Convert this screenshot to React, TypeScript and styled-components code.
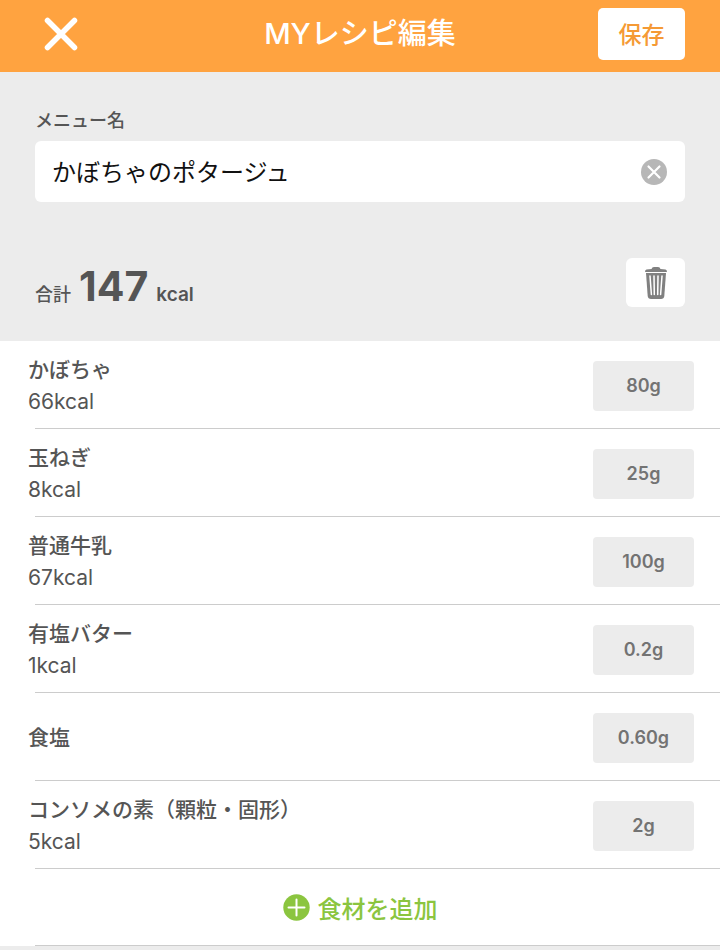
import React, { useState } from "react";
import styled, { createGlobalStyle } from "styled-components";

const colors = {
  orange: "#ffa340",
  saveText: "#f59a35",
  panel: "#ececec",
  text: "#555555",
  muted: "#737373",
  line: "#cccccc",
  green: "#8bc53f",
};

const GlobalStyle = createGlobalStyle`
  *, *::before, *::after { box-sizing: border-box; }
  body {
    margin: 0;
    background: ${colors.panel};
    color: ${colors.text};
    font-family: Inter, "Noto Sans CJK JP", sans-serif;
  }
  button, input { font: inherit; color: inherit; }
  button { border: 0; padding: 0; cursor: pointer; }
  svg { display: block; }
`;

const Header = styled.header`
  display: grid;
  grid-template-columns: 1fr auto 1fr;
  align-items: center;
  height: 72px;
  padding: 0 35px 4px;
  background: ${colors.orange};
  color: #fff;
`;

const Title = styled.h1`
  margin: 0;
  font-size: 29px;
  line-height: 40px;
  font-weight: 500;
`;

const CloseButton = styled.button`
  justify-self: start;
  padding: 8px;
  background: none;
`;

const SaveButton = styled.button`
  justify-self: end;
  width: 87px;
  height: 52px;
  padding-bottom: 2px;
  border-radius: 5px;
  background: #fff;
  color: ${colors.saveText};
  font-size: 23px;
  font-weight: 500;
`;

const Summary = styled.section`
  padding: 36px 35px 26px;
  background: ${colors.panel};
`;

const FieldLabel = styled.label`
  display: block;
  font-size: 18px;
  line-height: 26px;
  font-weight: 500;
`;

const Field = styled.div`
  display: flex;
  align-items: center;
  height: 61px;
  margin-top: 7px;
  padding: 0 17px;
  border-radius: 6px;
  background: #fff;
`;

const NameInput = styled.input`
  flex: 1;
  min-width: 0;
  height: 100%;
  padding: 0 0 2px;
  border: 0;
  outline: 0;
  background: none;
  color: #111;
  font-size: 24px;
`;

const ClearButton = styled.button`
  background: none;
`;

const TotalRow = styled.div`
  display: flex;
  justify-content: space-between;
  align-items: flex-start;
  margin-top: 56px;
`;

const Total = styled.p`
  display: flex;
  align-items: baseline;
  gap: 8px;
  height: 49px;
  margin: 8px 0 0;
  font-size: 18px;
  line-height: 40px;
  font-weight: 500;
`;

const TotalNumber = styled.strong`
  font-size: 41px;
  font-weight: 700;
`;

const TotalUnit = styled.span`
  font-size: 19px;
  font-weight: 600;
`;

const DeleteButton = styled.button`
  display: grid;
  place-items: center;
  width: 59px;
  height: 49px;
  border-radius: 6px;
  background: #fff;
  color: #808080;
`;

const List = styled.ul`
  margin: 0;
  padding: 0;
  list-style: none;
  background: #fff;
`;

const Item = styled.li`
  &::after {
    content: "";
    display: block;
    height: 1px;
    margin-left: 35px;
    background: ${colors.line};
  }
`;

const ItemBody = styled.div`
  display: flex;
  align-items: center;
  justify-content: space-between;
  min-height: 87px;
  padding: 2px 26px 0 28px;
`;

const ItemName = styled.div`
  font-size: 21px;
  line-height: 32px;
  font-weight: 500;
`;

const ItemEnergy = styled.div`
  font-size: 21px;
  line-height: 32px;
`;

const AmountButton = styled.button`
  width: 101px;
  height: 50px;
  border-radius: 4px;
  background: ${colors.panel};
  color: ${colors.muted};
  font-size: 18px;
  font-weight: 600;
`;

const AddButton = styled.button`
  display: flex;
  align-items: center;
  justify-content: center;
  gap: 8px;
  width: 100%;
  height: 76px;
  background: #fff;
  color: ${colors.green};
  font-size: 24px;
  font-weight: 500;
`;

const CloseIcon = () => (
  <svg width="36" height="36" viewBox="0 0 36 36" aria-hidden="true">
    <path d="M4.5 4.5 31.5 31.5M31.5 4.5 4.5 31.5" stroke="#fff" strokeWidth="5.5" strokeLinecap="round" />
  </svg>
);

const ClearIcon = () => (
  <svg width="28" height="28" viewBox="0 0 28 28" aria-hidden="true">
    <circle cx="14" cy="14" r="13" fill="#b7b7b7" />
    <path d="M8.5 8.500 19.500 19.500M19.500 8.500 8.500 19.500" stroke="#fff" strokeWidth="2.2" strokeLinecap="round" />
  </svg>
);

const TrashIcon = () => (
  <svg width="24" height="34" viewBox="0 0 24 34" aria-hidden="true">
    <path d="M7.500 3Q8 1 10 1h4q2 0 2.500 2l5 .5q1.500.3 1.500 2.500H1q0-2.200 1.500-2.500z" fill="currentColor" />
    <path d="M2 7h20l-1.700 23q-.3 3-3.300 3H7q-3 0-3.300-3z" fill="currentColor" />
    <path d="M6 10 7.400 28.500M10 10l.3 18.500M14 10l-.3 18.500M18 10 16.600 28.500" stroke="#fff" strokeWidth="1.500" strokeLinecap="round" />
  </svg>
);

const AddIcon = () => (
  <svg width="27" height="27" viewBox="0 0 27 27" aria-hidden="true">
    <circle cx="13.500" cy="13.500" r="13.200" fill="currentColor" />
    <path d="M13.500 5.500v16M5.500 13.500h16" stroke="#fff" strokeWidth="2" strokeLinecap="round" />
  </svg>
);

interface Ingredient {
  name: string;
  energy?: string;
  amount: string;
}

const ingredients: Ingredient[] = [
  { name: "かぼちゃ", energy: "66kcal", amount: "80g" },
  { name: "玉ねぎ", energy: "8kcal", amount: "25g" },
  { name: "普通牛乳", energy: "67kcal", amount: "100g" },
  { name: "有塩バター", energy: "1kcal", amount: "0.2g" },
  { name: "食塩", amount: "0.60g" },
  { name: "コンソメの素（顆粒・固形）", energy: "5kcal", amount: "2g" },
];

export default function App() {
  const [name, setName] = useState("かぼちゃのポタージュ");

  return (
    <main lang="ja">
      <GlobalStyle />
      <Header>
        <CloseButton type="button" aria-label="閉じる">
          <CloseIcon />
        </CloseButton>
        <Title>MYレシピ編集</Title>
        <SaveButton type="button">保存</SaveButton>
      </Header>
      <Summary>
        <FieldLabel htmlFor="menu-name">メニュー名</FieldLabel>
        <Field>
          <NameInput id="menu-name" value={name} onChange={(e) => setName(e.target.value)} />
          <ClearButton type="button" aria-label="クリア" onClick={() => setName("")}>
            <ClearIcon />
          </ClearButton>
        </Field>
        <TotalRow>
          <Total>
            合計
            <TotalNumber>147</TotalNumber>
            <TotalUnit>kcal</TotalUnit>
          </Total>
          <DeleteButton type="button" aria-label="削除">
            <TrashIcon />
          </DeleteButton>
        </TotalRow>
      </Summary>
      <List>
        {ingredients.map((item) => (
          <Item key={item.name}>
            <ItemBody>
              <div>
                <ItemName>{item.name}</ItemName>
                {item.energy && <ItemEnergy>{item.energy}</ItemEnergy>}
              </div>
              <AmountButton type="button" aria-label={`${item.name} ${item.amount}`}>
                {item.amount}
              </AmountButton>
            </ItemBody>
          </Item>
        ))}
        <Item>
          <AddButton type="button">
            <AddIcon />
            食材を追加
          </AddButton>
        </Item>
      </List>
    </main>
  );
}
